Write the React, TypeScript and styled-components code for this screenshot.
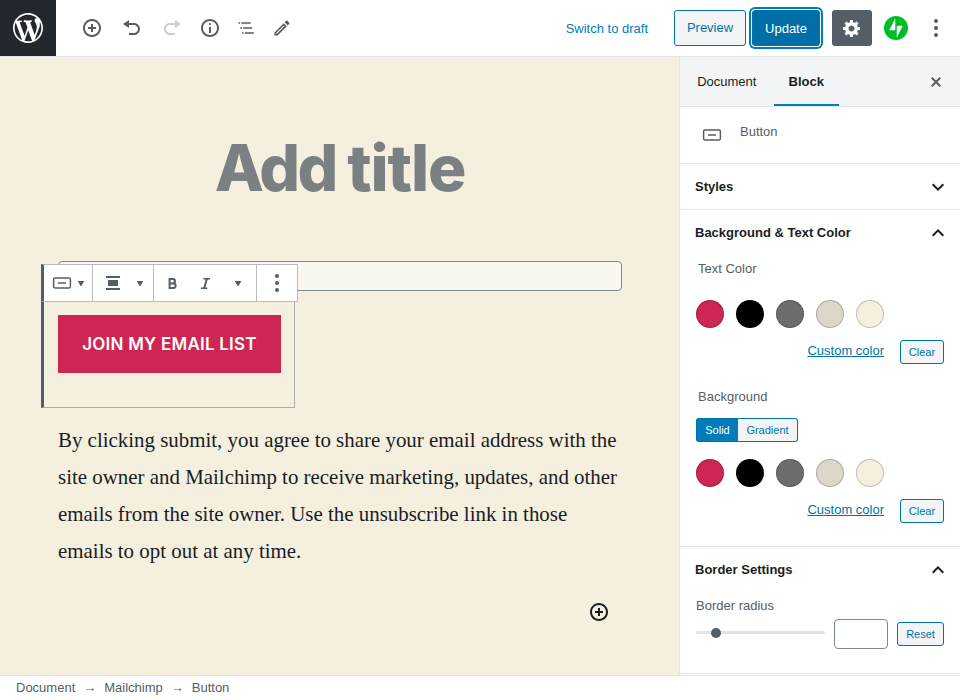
import React from 'react';
import styled, { createGlobalStyle, css } from 'styled-components';

const GlobalStyle = createGlobalStyle`
  *, *::before, *::after { box-sizing: border-box; }
  body { margin: 0; background: #fff; font-family: "Liberation Sans", Arial, sans-serif; font-size: 13px; color: #191e23; }
  button, input { font-family: inherit; font-size: inherit; margin: 0; }
  svg { display: block; flex: none; }
`;

const BLUE = '#007cba';
const DARK_BLUE = '#0073aa';
const SLATE = '#555d66';
const LINE = '#e2e4e7';
const CREAM = '#f5efe0';
const CRIMSON = '#cd2653';

const Page = styled.div`
  width: 960px;
  height: 700px;
  display: grid;
  grid-template-rows: 57px 618px 25px;
  overflow: hidden;
`;

/* Header */
const Header = styled.header`
  display: flex;
  align-items: flex-start;
  border-bottom: 1px solid ${LINE};
  background: #fff;
`;
const Logo = styled.a`
  width: 56px;
  height: 56px;
  display: grid;
  place-items: center;
  background: #23282e;
  color: #fff;
`;
const Tools = styled.div`
  display: flex;
  align-items: center;
  height: 56px;
  padding-left: 18px;
`;
const ToolButton = styled.button<{ $width: number; $faded?: boolean }>`
  width: ${(p) => p.$width}px;
  height: 36px;
  padding: 0;
  border: 0;
  background: none;
  display: grid;
  place-items: center;
  color: ${SLATE};
  opacity: ${(p) => (p.$faded ? 0.3 : 1)};
`;
const Actions = styled.div`
  display: flex;
  align-items: center;
  height: 56px;
  margin-left: auto;
  padding-right: 6px;
`;
const DraftLink = styled.button`
  padding: 0;
  border: 0;
  background: none;
  color: ${BLUE};
  line-height: 20px;
  margin: 1px 26px 0 0;
`;
const PreviewButton = styled.button`
  width: 72px;
  height: 36px;
  padding: 0 0 2px;
  border: 1px solid ${DARK_BLUE};
  border-radius: 3px;
  background: #f3f4f5;
  color: ${DARK_BLUE};
  margin-right: 6px;
`;
const UpdateButton = styled.button`
  width: 68px;
  height: 36px;
  padding: 1px 0 0;
  border: 1px solid ${DARK_BLUE};
  border-radius: 3px;
  background: #006fa7;
  color: #fff;
  box-shadow: 0 0 0 1px #fff, 0 0 0 3px ${BLUE};
  margin-right: 12px;
`;
const SettingsButton = styled.button`
  width: 40px;
  height: 36px;
  padding: 0;
  border: 0;
  border-radius: 3px;
  background: ${SLATE};
  color: #fff;
  display: grid;
  place-items: center;
  margin-right: 12px;
`;
const JetpackButton = styled.button`
  padding: 0;
  border: 0;
  background: none;
  margin-right: 10px;
`;

/* Editor */
const Main = styled.div`
  display: grid;
  grid-template-columns: 679px 281px;
  min-height: 0;
`;
const Canvas = styled.main`
  background: ${CREAM};
  padding: 69px 57px 0 58px;
  overflow: hidden;
`;
const Title = styled.h1`
  margin: 0;
  height: 84px;
  line-height: 84px;
  text-align: center;
  font-family: Inter, sans-serif;
  font-size: 64px;
  font-weight: 800;
  letter-spacing: -2.6px;
  color: #7b8183;
`;
const LooseWord = styled.span`
  letter-spacing: -1.15px;
`;
const EmailBlock = styled.section`
  position: relative;
  margin-top: 51px;
`;
const EmailInput = styled.div`
  height: 30px;
  border: 1px solid #7e8993;
  border-radius: 4px;
  background: #faf7ef;
`;
const SelectedBlock = styled.div`
  width: 254px;
  height: 117px;
  margin: 0 0 0 -17px;
  padding: 24px 0 0 14px;
  border: 1px solid #a9aeac;
  border-top: 0;
  border-left: 3px solid ${SLATE};
`;
const JoinButton = styled.div`
  width: 223px;
  height: 58px;
  display: grid;
  place-items: center;
  background: ${CRIMSON};
  color: #fff;
  font-family: Inter, sans-serif;
  font-size: 17px;
  font-weight: 600;
  letter-spacing: 0.23px;
  white-space: nowrap;
`;
const BlockToolbar = styled.div`
  position: absolute;
  left: -17px;
  top: 3px;
  display: flex;
  width: 257px;
  height: 38px;
  border: 1px solid #b5bcc2;
  border-left: 3px solid ${SLATE};
  background: #fff;
  color: ${SLATE};
`;
const ToolbarGroup = styled.div<{ $width: number; $pad: number; $gap?: number }>`
  width: ${(p) => p.$width}px;
  display: flex;
  align-items: center;
  padding-left: ${(p) => p.$pad}px;
  gap: ${(p) => p.$gap ?? 0}px;
  & + & { border-left: 1px solid #b5bcc2; }
`;
const FormatIcons = styled.div`
  display: flex;
  gap: 16px;
  margin: 0 5px 0 0;
`;
const Consent = styled.p`
  margin: 14px 0 0;
  font-family: "Liberation Serif", "Times New Roman", serif;
  font-size: 20.91px;
  line-height: 37px;
  color: #191e23;
  white-space: nowrap;
`;
const Appender = styled.div`
  display: flex;
  justify-content: flex-end;
  margin-top: 32px;
  padding-right: 13px;
`;

/* Sidebar */
const Sidebar = styled.aside`
  border-left: 1px solid ${LINE};
  background: #fff;
`;
const Tabs = styled.div`
  display: flex;
  height: 50px;
  background: #f3f4f5;
  border-bottom: 1px solid ${LINE};
`;
const Tab = styled.button<{ $active?: boolean }>`
  height: 49px;
  padding: 0 0.5px 0 0;
  border: 0;
  background: none;
  width: ${(p) => (p.$active ? 65 : 94)}px;
  color: #191e23;
  ${(p) =>
    p.$active &&
    css`
      font-weight: 600;
      box-shadow: inset 0 -2px 0 ${BLUE};
    `}
`;
const CloseButton = styled.button`
  margin-left: auto;
  margin-right: 14px;
  padding: 1px 0 0;
  border: 0;
  background: none;
  color: ${SLATE};
`;
const BlockCard = styled.div`
  display: flex;
  height: 57px;
  padding: 16px 16px 0 20px;
  gap: 16px;
  border-bottom: 1px solid ${LINE};
  color: ${SLATE};
  line-height: 18px;
`;
const Panel = styled.section<{ $height: number }>`
  height: ${(p) => p.$height}px;
  border-bottom: 1px solid ${LINE};
  padding: 0 16px;
`;
const PanelHeader = styled.h2`
  display: flex;
  align-items: center;
  justify-content: space-between;
  margin: 0 -6px 0 -1px;
  height: 45px;
  font-size: 13px;
  font-weight: 600;
`;
const Label = styled.div<{ $top: number; $inset?: boolean }>`
  margin-top: ${(p) => p.$top}px;
  padding-left: ${(p) => (p.$inset ? 2 : 0)}px;
  line-height: 18px;
  color: ${SLATE};
`;
const Swatches = styled.div<{ $top: number }>`
  display: flex;
  gap: 12px;
  margin-top: ${(p) => p.$top}px;
`;
const Swatch = styled.span<{ $color: string }>`
  width: 28px;
  height: 28px;
  border-radius: 50%;
  background: ${(p) => p.$color};
  border: 1px solid rgba(0, 0, 0, 0.2);
  background-origin: border-box;
`;
const PickerFooter = styled.div`
  display: flex;
  justify-content: flex-end;
  gap: 16px;
  margin-top: 12px;
`;
const CustomLink = styled.a`
  color: ${DARK_BLUE};
  text-decoration: underline;
  line-height: 21px;
`;
const SmallButton = styled.button<{ $width: number }>`
  width: ${(p) => p.$width}px;
  height: 24px;
  padding: 0;
  border: 1px solid ${DARK_BLUE};
  border-radius: 3px;
  background: #f3f4f5;
  color: ${DARK_BLUE};
  font-size: 11px;
`;
const Toggle = styled.div`
  display: flex;
  width: 102px;
  margin-top: 12px;
`;
const ToggleOption = styled.button<{ $active?: boolean }>`
  height: 24px;
  padding: 0;
  width: ${(p) => (p.$active ? 42 : 60)}px;
  font-size: 11px;
  border: 1px solid ${DARK_BLUE};
  border-radius: ${(p) => (p.$active ? '3px 0 0 3px' : '0 3px 3px 0')};
  ${(p) => (p.$active ? 'border-right: 0;' : 'border-left: 0;')}
  background: ${(p) => (p.$active ? BLUE : '#f3f4f5')};
  color: ${(p) => (p.$active ? '#fff' : DARK_BLUE)};
`;
const RadiusRow = styled.div`
  display: flex;
  align-items: center;
  margin-top: 4px;
  height: 30px;
`;
const Track = styled.div`
  width: 129px;
  height: 3px;
  margin: -3px 9px 0 0;
  border-radius: 2px;
  background: ${LINE};
  display: flex;
  align-items: center;
  padding-left: 15px;
`;
const Thumb = styled.span`
  width: 10px;
  height: 10px;
  border-radius: 50%;
  background: ${SLATE};
`;
const NumberField = styled.input`
  width: 54px;
  height: 30px;
  margin-right: 9px;
  border: 1px solid #7e8993;
  border-radius: 4px;
  background: #fff;
`;

/* Footer */
const Footer = styled.footer`
  border-top: 1px solid ${LINE};
  background: #fff;
  display: flex;
  padding: 0 16px;
  line-height: 23px;
  color: ${SLATE};
  gap: 8px;
`;

const Glyph = ({ d, size = 20, box = '0 0 20 20' }: { d: string; size?: number; box?: string }) => (
  <svg width={size} height={size} viewBox={box} fill="currentColor">
    <path d={d} />
  </svg>
);

const paths = {
  wordpress:
    'M20 10c0-5.51-4.49-10-10-10C4.48 0 0 4.49 0 10c0 5.52 4.48 10 10 10 5.51 0 10-4.48 10-10zM7.78 15.37L4.37 6.22c.55-.02 1.17-.08 1.17-.08.5-.06.44-1.13-.06-1.11 0 0-1.45.11-2.37.11-.18 0-.37 0-.58-.01C4.12 2.69 6.87 1.11 10 1.11c2.33 0 4.45.87 6.05 2.34-.68-.11-1.65.39-1.65 1.58 0 .74.45 1.36.9 2.1.35.61.55 1.36.55 2.46 0 1.49-1.4 5-1.4 5l-3.03-8.37c.54-.02.82-.17.82-.17.5-.05.44-1.25-.06-1.22 0 0-1.44.12-2.38.12-.87 0-2.33-.12-2.33-.12-.5-.03-.56 1.2-.06 1.22l.92.08 1.26 3.41zM17.41 10c.24-.64.74-1.87.43-4.25.7 1.29 1.05 2.71 1.05 4.25 0 3.29-1.73 6.24-4.4 7.78.97-2.59 1.94-5.2 2.92-7.78zM6.1 18.09C3.12 16.65 1.11 13.53 1.11 10c0-1.3.23-2.48.72-3.59C3.25 10.3 4.67 14.2 6.1 18.09zm4.03-6.63l2.58 6.98c-.86.29-1.76.45-2.71.45-.79 0-1.57-.11-2.29-.33.81-2.38 1.62-4.74 2.42-7.1z',
  insert:
    'M10 1c-5 0-9 4-9 9s4 9 9 9 9-4 9-9-4-9-9-9zm0 16c-3.9 0-7-3.1-7-7s3.1-7 7-7 7 3.1 7 7-3.1 7-7 7zm1-11H9v3H6v2h3v3h2v-3h3V9h-3V6z',
  undo: 'M12 5H7V2L1 6l6 4V7h5c2.2 0 4 1.8 4 4s-1.8 4-4 4H7v2h5c3.3 0 6-2.7 6-6s-2.7-6-6-6z',
  redo: 'M8 5h5V2l6 4-6 4V7H8c-2.2 0-4 1.8-4 4s1.8 4 4 4h5v2H8c-3.3 0-6-2.7-6-6s2.7-6 6-6z',
  info: 'M9 15h2V9H9v6zm1-10c-.5 0-1 .5-1 1s.5 1 1 1 1-.5 1-1-.5-1-1-1zm0-4c-5 0-9 4-9 9s4 9 9 9 9-4 9-9-4-9-9-9zm0 16c-3.9 0-7-3.1-7-7s3.1-7 7-7 7 3.1 7 7-3.1 7-7 7z',
  outline:
    'M2.4 4.2h1.7v1.6H2.4zM5.4 4.2h9.2v1.6H5.4zM4.2 9.2h1.7v1.6H4.2zM7.2 9.2h9v1.6h-9zM5.9 14.2h1.7v1.6H5.9zM8.8 14.2h9v1.6h-9z',
  edit: 'M14.06 9.02l.92.92L5.92 19H5v-.92l9.06-9.06M17.66 3c-.25 0-.51.1-.7.29l-1.83 1.83 3.75 3.75 1.83-1.83c.39-.39.39-1.02 0-1.41l-2.34-2.34c-.2-.2-.45-.29-.71-.29zm-3.6 3.19L3 17.25V21h3.75L17.81 9.94l-3.75-3.75z',
  gear: 'M18 12h-2.18c-.17.7-.44 1.35-.81 1.93l1.54 1.54-2.1 2.1-1.54-1.54c-.58.36-1.23.63-1.91.79V19H8v-2.18c-.68-.16-1.33-.43-1.91-.79l-1.54 1.54-2.12-2.12 1.54-1.54c-.36-.58-.63-1.23-.79-1.91H1V9.03h2.17c.16-.7.44-1.35.8-1.94L2.43 5.55l2.1-2.1 1.54 1.54c.58-.37 1.24-.64 1.93-.81V2h3v2.18c.68.16 1.33.43 1.91.79l1.54-1.54 2.12 2.12-1.54 1.54c.36.59.64 1.24.8 1.94H18V12zm-8.5 1.5c1.66 0 3-1.34 3-3s-1.34-3-3-3-3 1.34-3 3 1.34 3 3 3z',
  dots: 'M10 1a2 2 0 1 1 0 4a2 2 0 0 1 0-4zM10 8a2 2 0 1 1 0 4a2 2 0 0 1 0-4zM10 15a2 2 0 1 1 0 4a2 2 0 0 1 0-4z',
  close:
    'M14.95 6.46L11.41 10l3.54 3.54-1.41 1.41L10 11.42l-3.53 3.53-1.42-1.42L8.58 10 5.05 6.47l1.42-1.42L10 8.58l3.54-3.53z',
  chevronUp: 'M12,8l-6,6l1.41,1.41L12,10.83l4.59,4.58L18,14L12,8z',
  chevronDown: 'M7.41,8.59L12,13.17l4.59-4.58L18,10l-6,6l-6-6L7.41,8.59z',
  align: 'M3 3h14v2H3zM5 7h10v6H5zM3 15h14v2H3z',
};

const ButtonIcon = () => (
  <svg width="24" height="24" viewBox="0 0 24 24" fill="none" stroke="currentColor" strokeWidth="1.5">
    <rect x="3.6" y="7" width="16.8" height="9.9" rx="1.3" />
    <path d="M8 12h8" />
  </svg>
);

const Caret = () => (
  <svg width="6" height="6" viewBox="0 0 6 6" fill="currentColor">
    <path d="M0 1h6v.6L3.4 6h-.8L0 1.6z" />
  </svg>
);

/* Compact, heavy marks for the inline format buttons */
const BoldIcon = () => (
  <svg width="17" height="17" viewBox="0 0 17 17" fill="none" stroke="currentColor" strokeWidth="2">
    <path d="M5.6 4v9M4.6 4.1h4.2a2.1 2.1 0 0 1 0 4.3H5.6M8.8 8.4h.5a2.3 2.3 0 0 1 0 4.6H4.6" />
  </svg>
);
const ItalicIcon = () => (
  <svg width="17" height="17" viewBox="0 0 17 17" fill="none" stroke="currentColor">
    <path d="M6.4 3.8h6.6M3.9 13.3h6.4" strokeWidth="1.6" />
    <path d="M9.9 3.8L7.2 13.3" strokeWidth="2" />
  </svg>
);

const JetpackIcon = () => (
  <svg width="24" height="24" viewBox="0 0 32 32">
    <circle cx="16" cy="16" r="16" fill="#00be28" />
    <path d="M15 19H7l8-16zM17 29V13h8z" fill="#fff" />
  </svg>
);

const Chevron = ({ open }: { open?: boolean }) => (
  <Glyph d={open ? paths.chevronUp : paths.chevronDown} size={24} box="0 0 24 24" />
);

const palette = [CRIMSON, '#000000', '#6d6d6d', '#dcd7ca', CREAM];

const ColorPicker = ({ top }: { top: number }) => (
  <>
    <Swatches $top={top}>
      {palette.map((color) => (
        <Swatch key={color} $color={color} />
      ))}
    </Swatches>
    <PickerFooter>
      <CustomLink>Custom color</CustomLink>
      <SmallButton $width={44}>Clear</SmallButton>
    </PickerFooter>
  </>
);

export default function App() {
  return (
    <Page>
      <GlobalStyle />
      <Header>
        <Logo aria-label="View posts">
          <Glyph d={paths.wordpress} size={36} box="-2 -2 24 24" />
        </Logo>
        <Tools>
          <ToolButton $width={36}><Glyph d={paths.insert} /></ToolButton>
          <ToolButton $width={44}><Glyph d={paths.undo} /></ToolButton>
          <ToolButton $width={36} $faded><Glyph d={paths.redo} /></ToolButton>
          <ToolButton $width={40}><Glyph d={paths.info} /></ToolButton>
          <ToolButton $width={32}><Glyph d={paths.outline} /></ToolButton>
          <ToolButton $width={40}><Glyph d={paths.edit} box="0 0 24 24" /></ToolButton>
        </Tools>
        <Actions>
          <DraftLink>Switch to draft</DraftLink>
          <PreviewButton>Preview</PreviewButton>
          <UpdateButton>Update</UpdateButton>
          <SettingsButton><Glyph d={paths.gear} /></SettingsButton>
          <JetpackButton><JetpackIcon /></JetpackButton>
          <ToolButton $width={36}><Glyph d={paths.dots} /></ToolButton>
        </Actions>
      </Header>

      <Main>
        <Canvas>
          <Title>
            Add <LooseWord>title</LooseWord>
          </Title>
          <EmailBlock>
            <EmailInput />
            <SelectedBlock>
              <JoinButton>JOIN MY EMAIL LIST</JoinButton>
            </SelectedBlock>
            <BlockToolbar>
              <ToolbarGroup $width={48} $pad={6} $gap={4}>
                <ButtonIcon />
                <Caret />
              </ToolbarGroup>
              <ToolbarGroup $width={61} $pad={10} $gap={14}>
                <Glyph d={paths.align} />
                <Caret />
              </ToolbarGroup>
              <ToolbarGroup $width={103} $pad={10} $gap={16}>
                <FormatIcons>
                  <BoldIcon />
                  <ItalicIcon />
                </FormatIcons>
                <Caret />
              </ToolbarGroup>
              <ToolbarGroup $width={41} $pad={10}>
                <Glyph d={paths.dots} />
              </ToolbarGroup>
            </BlockToolbar>
          </EmailBlock>
          <Consent>
            By clicking submit, you agree to share your email address with the
            <br />
            site owner and Mailchimp to receive marketing, updates, and other
            <br />
            emails from the site owner. Use the unsubscribe link in those
            <br />
            emails to opt out at any time.
          </Consent>
          <Appender>
            <Glyph d={paths.insert} />
          </Appender>
        </Canvas>

        <Sidebar>
          <Tabs>
            <Tab>Document</Tab>
            <Tab $active>Block</Tab>
            <CloseButton aria-label="Close settings"><Glyph d={paths.close} /></CloseButton>
          </Tabs>
          <BlockCard>
            <ButtonIcon />
            <span>Button</span>
          </BlockCard>
          <Panel $height={46}>
            <PanelHeader>Styles<Chevron /></PanelHeader>
          </Panel>
          <Panel $height={337}>
            <PanelHeader>Background &amp; Text Color<Chevron open /></PanelHeader>
            <Label $top={5} $inset>Text Color</Label>
            <ColorPicker top={22} />
            <Label $top={24} $inset>Background</Label>
            <Toggle>
              <ToggleOption $active>Solid</ToggleOption>
              <ToggleOption>Gradient</ToggleOption>
            </Toggle>
            <ColorPicker top={17} />
          </Panel>
          <Panel $height={127}>
            <PanelHeader>Border Settings<Chevron open /></PanelHeader>
            <Label $top={5}>Border radius</Label>
            <RadiusRow>
              <Track><Thumb /></Track>
              <NumberField aria-label="Border radius" />
              <SmallButton $width={47}>Reset</SmallButton>
            </RadiusRow>
          </Panel>
        </Sidebar>
      </Main>

      <Footer>
        <span>Document</span>
        <span>→</span>
        <span>Mailchimp</span>
        <span>→</span>
        <span>Button</span>
      </Footer>
    </Page>
  );
}
